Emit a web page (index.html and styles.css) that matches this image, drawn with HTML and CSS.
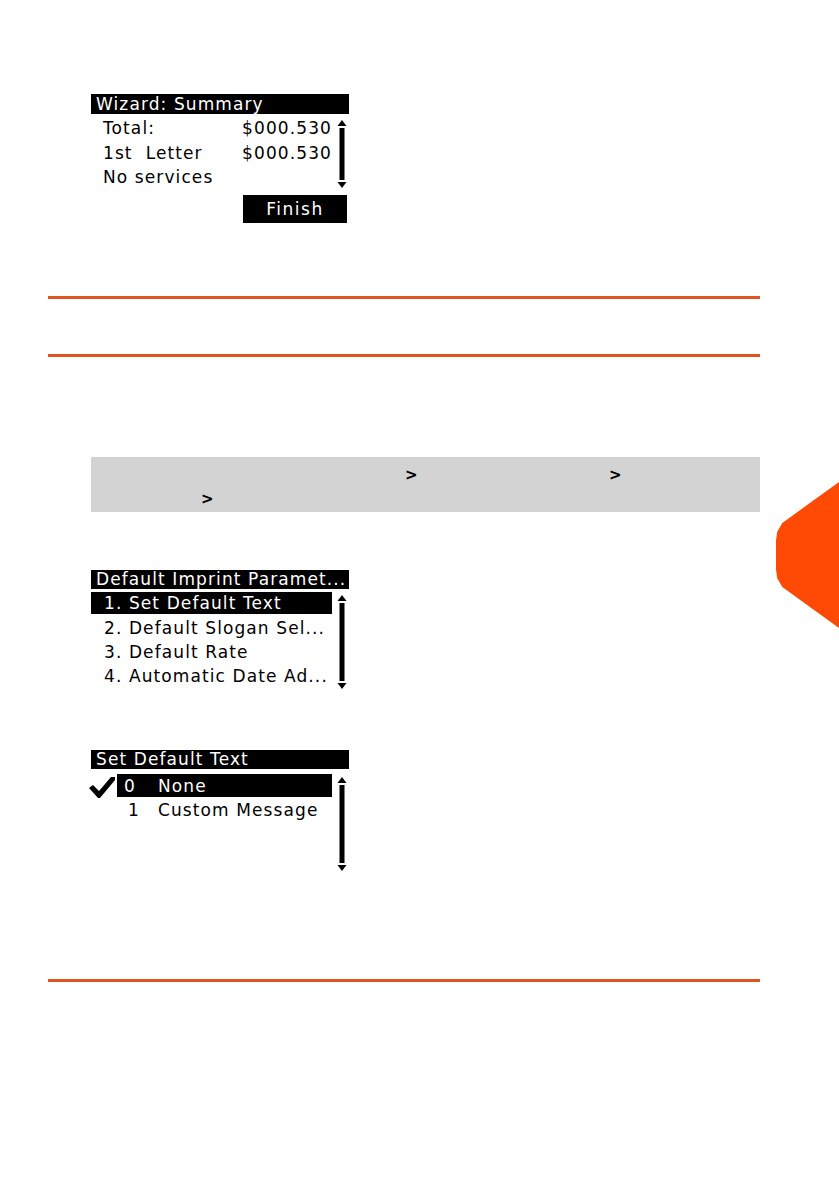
FILE: index.html
```html
<!DOCTYPE html>
<html>
<head>
<meta charset="utf-8">
<link rel="stylesheet" href="styles.css">
</head>
<body>
<div class="page">
  <div class="tab"></div>

  <section class="screen s1">
    <div class="title">Wizard: Summary</div>
    <div class="body">
      <div class="list">
        <div class="row"><span>Total:</span><span>$000.530</span></div>
        <div class="row"><span>1st&nbsp; Letter</span><span>$000.530</span></div>
        <div class="row"><span>No services</span><span></span></div>
      </div>
      <svg class="scroll" width="10" height="68" viewBox="0 0 10 68">
        <polygon points="5,0 9.5,6 0.5,6" fill="#000"/>
        <rect x="2.5" y="8" width="5" height="52" fill="#000"/>
        <polygon points="0.5,62 9.5,62 5,68" fill="#000"/>
      </svg>
    </div>
    <div class="finish">Finish</div>
  </section>

  <hr class="rule r1">
  <hr class="rule r2">

  <div class="graybox">
    <div class="gline"><span class="sp sp1"></span><span class="gt">&gt;</span><span class="sp sp2"></span><span class="gt">&gt;</span></div>
    <div class="gline"><span class="sp sp3"></span><span class="gt">&gt;</span></div>
  </div>

  <section class="screen s2">
    <div class="title">Default Imprint Paramet...</div>
    <div class="body">
      <div class="list">
        <div class="item sel">1. Set Default Text</div>
        <div class="item">2. Default Slogan Sel...</div>
        <div class="item">3. Default Rate</div>
        <div class="item">4. Automatic Date Ad...</div>
      </div>
      <svg class="scroll" width="10" height="94" viewBox="0 0 10 94">
        <polygon points="5,0 9.5,6 0.5,6" fill="#000"/>
        <rect x="2.5" y="8" width="5" height="78" fill="#000"/>
        <polygon points="0.5,88 9.5,88 5,94" fill="#000"/>
      </svg>
    </div>
  </section>

  <section class="screen s3">
    <div class="title">Set Default Text</div>
    <div class="body">
      <div class="list">
        <div class="opt">
          <svg class="check" width="26" height="22" viewBox="0 0 26 22">
            <polygon points="0,11 4,8 10,14 22,0 26,0 26,3 11,21 9,21" fill="#000"/>
          </svg>
          <div class="optsel"><span class="num">0</span><span>None</span></div>
        </div>
        <div class="opt">
          <span class="checkspace"></span>
          <div class="optrow"><span class="num n1">1</span><span>Custom Message</span></div>
        </div>
      </div>
      <svg class="scroll" width="10" height="94" viewBox="0 0 10 94">
        <polygon points="5,0 9.5,6 0.5,6" fill="#000"/>
        <rect x="2.5" y="8" width="5" height="78" fill="#000"/>
        <polygon points="0.5,88 9.5,88 5,94" fill="#000"/>
      </svg>
    </div>
  </section>

  <hr class="rule r3">
</div>
</body>
</html>
```

FILE: styles.css
```css
html, body {
  margin: 0;
  padding: 0;
  background: #fff;
}
.page {
  position: relative;
  width: 839px;
  height: 1191px;
  overflow: hidden;
  font-family: "DejaVu Sans", "Liberation Sans", sans-serif;
  color: #000;
}
.tab {
  position: absolute;
  right: 0;
  top: 482px;
  width: 63px;
  height: 146px;
  background: #fe4a04;
  clip-path: polygon(100% 0, 100% 100%, 10% 72%, 2% 66%, 0 60%, 0 40%, 2% 34%, 10% 28%);
}
.screen {
  width: 258px;
  margin-left: 91px;
  font-size: 17px;
  letter-spacing: 1.1px;
}
.title {
  background: #000;
  color: #fff;
  height: 20px;
  line-height: 20px;
  padding-left: 5px;
  white-space: nowrap;
  overflow: hidden;
}
.body {
  display: flex;
}
.list {
  flex: 1;
}
.scroll {
  display: block;
  margin-right: 2px;
  margin-left: 1px;
}
/* screen 1 */
.s1 { margin-top: 94px; }
.s1 .body { margin-top: 2px; }
.s1 .list { padding-left: 12px; padding-right: 4px; }
.s1 .row {
  display: flex;
  justify-content: space-between;
  height: 24.5px;
  line-height: 25px;
}
.s1 .scroll { margin-top: 4px; }
.finish {
  margin-left: 152px;
  margin-top: 5px;
  width: 104px;
  height: 28px;
  line-height: 28px;
  background: #000;
  color: #fff;
  text-align: center;
  letter-spacing: 1.5px;
}
/* rules */
.rule {
  border: 0;
  height: 3px;
  background: #e2541d;
  width: 712px;
  margin: 0 0 0 48px;
}
.r1 { margin-top: 73px; }
.r2 { margin-top: 55px; }
.r3 { margin-top: 108px; }
/* gray box */
.graybox {
  margin: 100px 0 0 91px;
  width: 669px;
  height: 55px;
  background: #d3d3d3;
  box-sizing: border-box;
  padding-top: 11px;
  font-family: "DejaVu Sans", sans-serif;
  font-size: 15px;
  font-weight: bold;
}
.gline {
  display: flex;
  height: 24px;
  line-height: 14px;
}
.sp { display: inline-block; flex: none; }
.sp1 { width: 314px; }
.sp2 { width: 195px; }
.sp3 { width: 110px; }
.gt { display: inline-block; width: 9px; }
/* screen 2 */
.s2 { margin-top: 58px; }
.s2 .title { height: 19px; line-height: 19px; }
.s2 .body { margin-top: 3px; }
.item {
  height: 24.3px;
  line-height: 25px;
  padding-left: 13px;
  white-space: nowrap;
}
.item.sel {
  background: #000;
  color: #fff;
  height: 22px;
  line-height: 23px;
  margin-bottom: 2.3px;
}
.s2 .list { margin-right: 4px; }
.s2 .scroll { margin-top: 3px; }
/* screen 3 */
.s3 { margin-top: 61px; }
.s3 .title { height: 19px; line-height: 19px; }
.s3 .body { margin-top: 5px; }
.s3 .list { margin-left: -2px; margin-right: 4px; }
.opt {
  display: flex;
  align-items: flex-start;
  height: 24px;
}
.check { display: block; flex: none; margin-top: 3px; margin-right: 2px; }
.checkspace { display: block; width: 28px; flex: none; }
.optsel, .optrow {
  flex: 1;
  height: 23px;
  line-height: 24px;
  display: flex;
  white-space: nowrap;
}
.optsel { background: #000; color: #fff; }
.num { display: inline-block; width: 41px; padding-left: 7px; box-sizing: border-box; flex: none; }
.num.n1 { padding-left: 11px; }
.s3 .scroll { margin-top: 3px; }
```
